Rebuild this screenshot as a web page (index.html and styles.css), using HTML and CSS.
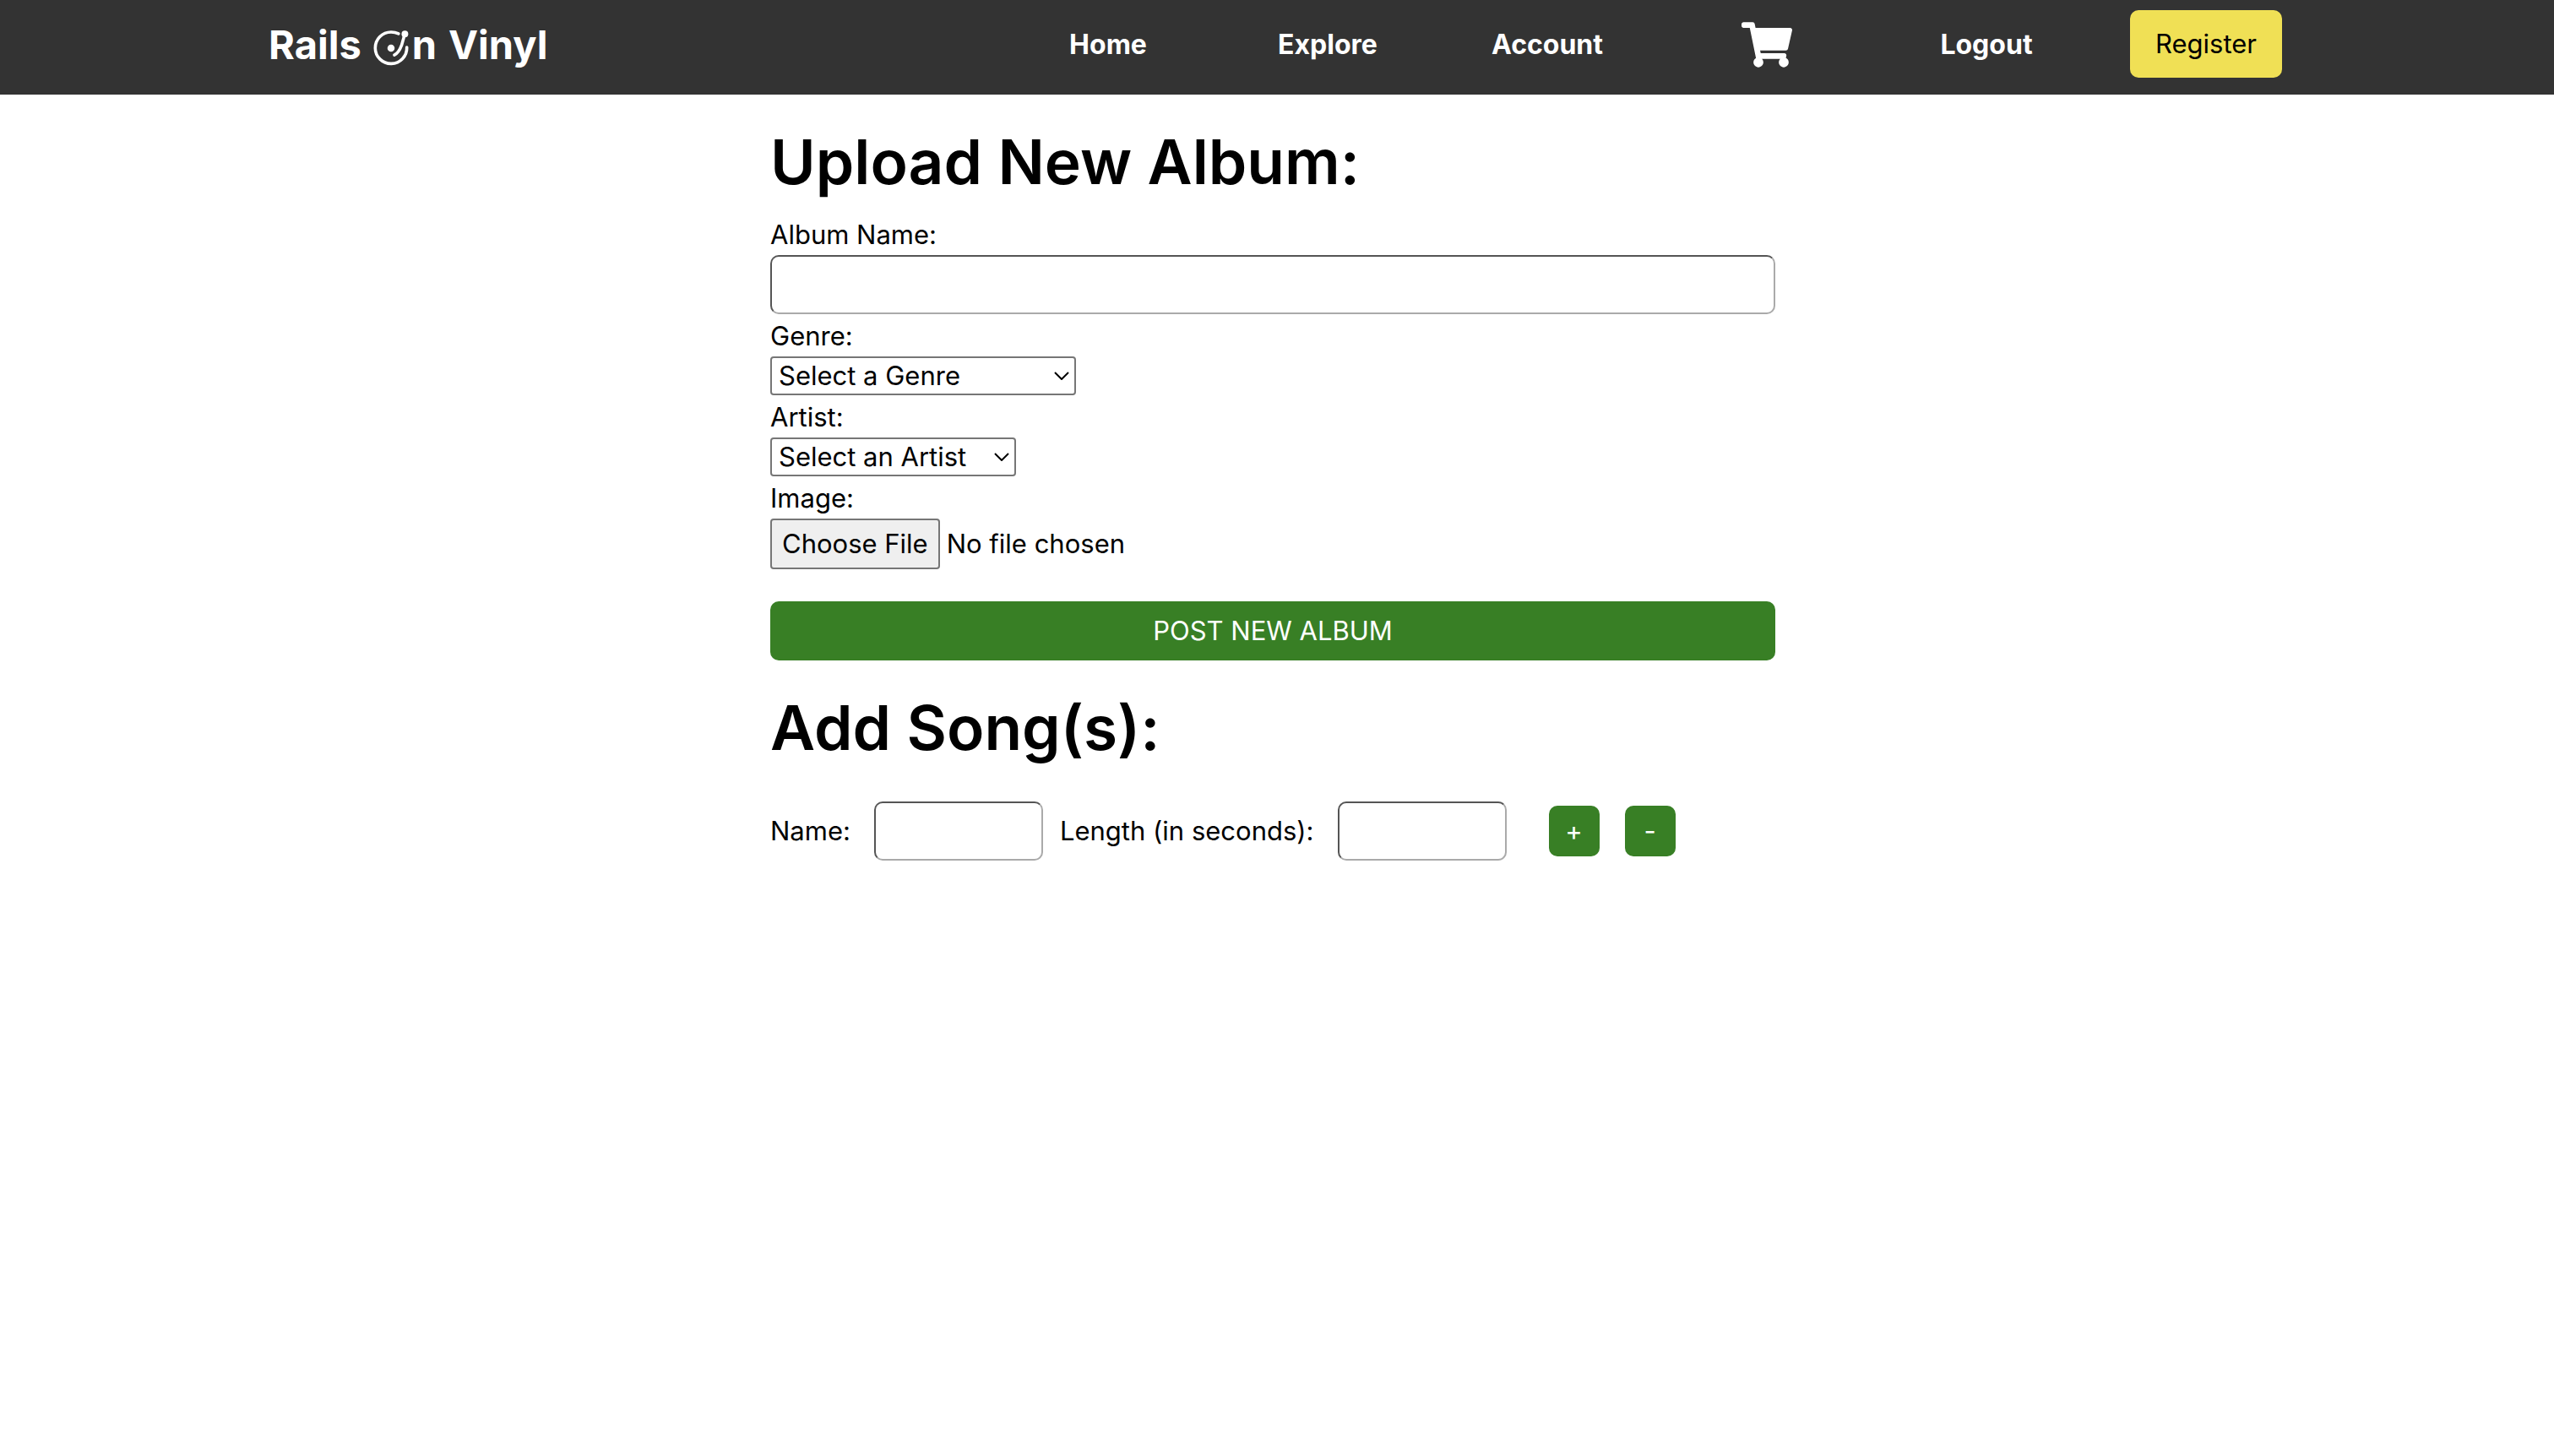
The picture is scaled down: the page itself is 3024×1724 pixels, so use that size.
FILE: index.html
```html
<!DOCTYPE html>
<html lang="en">
<head>
  <meta charset="utf-8">
  <meta name="viewport" content="width=device-width, initial-scale=1">
  <title>Rails On Vinyl</title>
  <link rel="stylesheet" href="styles.css">
</head>
<body>
  <header class="site-header">
    <a class="logo" href="#" aria-label="Rails On Vinyl">
      <span>Rails</span>
      <span class="logo-on">
        <svg class="logo-disc" viewBox="42 47 126 128" aria-hidden="true">
          <path d="M132 59 C126 56 116 53 105 53 A57 57 0 1 0 162 108" fill="none" stroke="currentColor" stroke-width="11" stroke-linecap="round"/>
          <path d="M154 62 L143 101 Q133 128 117 136" fill="none" stroke="currentColor" stroke-width="11" stroke-linecap="round" stroke-linejoin="round"/>
          <circle cx="155" cy="60" r="12" fill="currentColor"/>
          <circle cx="105" cy="111" r="13" fill="currentColor"/>
        </svg>
        <span>n</span>
      </span>
      <span>Vinyl</span>
    </a>
    <nav class="site-nav">
      <a href="#">Home</a>
      <a href="#">Explore</a>
      <a href="#">Account</a>
      <a href="#" aria-label="Cart">
        <svg class="cart" viewBox="0 0 576 512" aria-hidden="true"><path fill="currentColor" d="M528.12 301.319l47.273-208C578.806 78.301 567.391 64 551.99 64H159.208l-9.166-44.81C147.758 8.021 137.93 0 126.529 0H24C10.745 0 0 10.745 0 24v16c0 13.255 10.745 24 24 24h69.883l70.248 343.435C147.325 417.1 136 435.222 136 456c0 30.928 25.072 56 56 56s56-25.072 56-56c0-15.674-6.447-29.835-16.824-40h209.647C430.447 426.165 424 440.326 424 456c0 30.928 25.072 56 56 56s56-25.072 56-56c0-22.172-12.888-41.332-31.579-50.405l5.517-24.276c3.413-15.018-8.002-29.319-23.403-29.319H218.117l-6.545-32h293.145c11.206 0 20.92-7.754 23.403-18.681z"/></svg>
      </a>
      <a href="#">Logout</a>
      <button class="register" type="button">Register</button>
    </nav>
  </header>

  <main class="page">
    <form class="album-form">
      <h1>Upload New Album:</h1>
      <label for="album-name">Album Name:</label>
      <input class="text-input" id="album-name" type="text">
      <label for="genre">Genre:</label>
      <div class="select select-genre">
        <select id="genre"><option>Select a Genre</option></select>
        <svg class="chevron" viewBox="0 0 18 10" aria-hidden="true"><path d="M1 1l8 8 8-8" fill="none" stroke="currentColor" stroke-width="2"/></svg>
      </div>
      <label for="artist">Artist:</label>
      <div class="select select-artist">
        <select id="artist"><option>Select an Artist</option></select>
        <svg class="chevron" viewBox="0 0 18 10" aria-hidden="true"><path d="M1 1l8 8 8-8" fill="none" stroke="currentColor" stroke-width="2"/></svg>
      </div>
      <label for="image">Image:</label>
      <input class="file-input" id="image" type="file">
      <button class="submit" type="submit">POST NEW ALBUM</button>
    </form>

    <section class="songs">
      <h1>Add Song(s):</h1>
      <div class="song-row">
        <div class="song-field">
          <label for="song-name">Name:</label>
          <input class="text-input" id="song-name" type="text">
        </div>
        <div class="song-field">
          <label for="song-length">Length (in seconds):</label>
          <input class="text-input" id="song-length" type="text">
        </div>
        <div class="song-actions">
          <button type="button" aria-label="Add song">+</button>
          <button type="button" aria-label="Remove song">-</button>
        </div>
      </div>
    </section>
  </main>
</body>
</html>
```
FILE: styles.css
```css
*,
*::before,
*::after {
  box-sizing: border-box;
}

body {
  margin: 0;
  background: #fff;
  color: #000;
  font-family: Inter, "Liberation Sans", sans-serif;
  font-size: 31px;
  line-height: 38px;
}

input,
select,
button {
  margin: 0;
  color: inherit;
  font: inherit;
}

button {
  padding: 0;
  border: 0;
  cursor: pointer;
}

.site-header {
  display: flex;
  align-items: center;
  justify-content: space-between;
  height: 112px;
  padding: 0 282px 8px 318px;
  background: #333;
  color: #fff;
}

.site-header a {
  padding-top: 2px;
  color: inherit;
  text-decoration: none;
  font-weight: 700;
}

.logo {
  display: flex;
  gap: 14px;
  align-items: center;
  font-size: 47px;
  line-height: 60px;
}

.logo-on {
  display: flex;
  gap: 4px;
  align-items: center;
}

.logo-disc {
  width: 42px;
  height: 42px;
  margin-top: 8px;
}

.site-nav {
  display: grid;
  flex: 0 1 1560px;
  grid-template-columns: repeat(6, 1fr);
  align-items: center;
  justify-items: center;
}

.site-nav a {
  font-size: 32px;
}

.cart {
  display: block;
  width: 60px;
  height: 54px;
}

.register {
  width: 180px;
  height: 80px;
  border-radius: 10px;
  background: #f0e055;
  color: #000;
}

.page {
  max-width: 1200px;
  margin: 0 auto;
  padding: 32px 10px 40px 0;
}

h1 {
  margin: 0;
  font-size: 73px;
  font-weight: 600;
  line-height: 96px;
}

.album-form {
  display: flex;
  flex-direction: column;
  align-items: flex-start;
}

.album-form label {
  margin: 7px 0 5px;
}

.album-form h1 {
  margin-bottom: 12px;
}

.text-input {
  width: 100%;
  height: 70px;
  padding: 0 16px;
  border: 2px solid;
  border-color: #555 #aaa #aaa #555;
  border-radius: 10px;
  background: #fff;
}

.select {
  position: relative;
  height: 46px;
}

.select-genre {
  width: 362px;
}

.select-artist {
  width: 291px;
}

.select select {
  width: 100%;
  height: 100%;
  padding: 0 8px;
  border: 2px solid #767676;
  border-radius: 4px;
  background: #fff;
  appearance: none;
}

.chevron {
  position: absolute;
  top: 18px;
  right: 8px;
  width: 18px;
  height: 10px;
  pointer-events: none;
}

.file-input {
  width: 100%;
  height: 60px;
}

.file-input::file-selector-button {
  height: 60px;
  margin: 0 8px 0 0;
  padding: 0 12px;
  border: 2px solid #767676;
  border-radius: 4px;
  background: #efefef;
  color: #000;
  font: inherit;
}

.submit {
  width: 100%;
  height: 70px;
  margin-top: 38px;
  border-radius: 10px;
  background: #387f25;
  color: #fff;
}

.songs {
  margin-top: 32px;
}

.song-row {
  display: flex;
  align-items: center;
  margin-top: 39px;
}

.song-field {
  display: flex;
  align-items: center;
  gap: 28px;
  margin-right: 20px;
}

.song-field .text-input {
  width: 200px;
}

.song-actions {
  display: flex;
  gap: 30px;
  margin-left: 30px;
}

.song-actions button {
  width: 60px;
  height: 60px;
  border-radius: 10px;
  background: #387f25;
  color: #fff;
}
```
